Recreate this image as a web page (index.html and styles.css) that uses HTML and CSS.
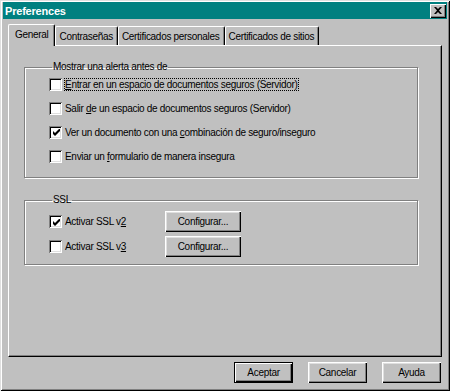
FILE: index.html
```html
<!DOCTYPE html>
<html>
<head>
<meta charset="utf-8">
<link rel="stylesheet" href="styles.css">
</head>
<body>
<div class="window">
  <div class="titlebar">
    <span class="title">Preferences</span>
    <span class="close"><svg width="8" height="7" viewBox="0 0 8 7"><path d="M0 0h2l2 2 2-2h2L5 3.5 8 7H6L4 5 2 7H0l3-3.5z" fill="#000"/></svg></span>
  </div>
  <div class="tabs">
    <div class="tab active">General</div>
    <div class="tab">Contraseñas</div>
    <div class="tab">Certificados personales</div>
    <div class="tab">Certificados de sitios</div>
  </div>
  <div class="panel">
    <fieldset class="group g1">
      <legend>Mostrar una alerta antes de</legend>
      <div class="row first"><span class="cb"></span><span class="lbl focus"><u>E</u>ntrar en un espacio de documentos seguros (Servidor)</span></div>
      <div class="row"><span class="cb"></span><span class="lbl">Salir <u>d</u>e un espacio de documentos seguros (Servidor)</span></div>
      <div class="row"><span class="cb checked"><svg width="7" height="7" viewBox="0 0 7 7"><path d="M0 2v3l2 2 5-5V-1L2 4z" fill="#000"/></svg></span><span class="lbl">Ver un documento con una <u>c</u>ombinación de seguro/inseguro</span></div>
      <div class="row"><span class="cb"></span><span class="lbl">Enviar un <u>f</u>ormulario de manera insegura</span></div>
    </fieldset>
    <fieldset class="group g2">
      <legend>SSL</legend>
      <div class="row ssl"><span class="cb checked"><svg width="7" height="7" viewBox="0 0 7 7"><path d="M0 2v3l2 2 5-5V-1L2 4z" fill="#000"/></svg></span><span class="lbl sslbl">Activar SSL v<u>2</u></span><button class="btn cfg">Configurar...</button></div>
      <div class="row ssl"><span class="cb"></span><span class="lbl sslbl">Activar SSL v<u>3</u></span><button class="btn cfg">Configurar...</button></div>
    </fieldset>
  </div>
  <div class="buttons">
    <button class="btn default">Aceptar</button>
    <button class="btn">Cancelar</button>
    <button class="btn">Ayuda</button>
  </div>
</div>
</body>
</html>
```

FILE: styles.css
```css
* { box-sizing: border-box; }
html, body { margin: 0; padding: 0; background: #c0c0c0; }
body {
  font-family: "Liberation Sans", Arial, sans-serif;
  font-size: 10px;
  letter-spacing: -0.3px;
  color: #000;
}
.window {
  width: 450px;
  height: 391px;
  background: #c0c0c0;
  padding: 3px;
  box-shadow: inset 1px 1px 0 #dfdfdf, inset -1px -1px 0 #000, inset 2px 2px 0 #fff, inset -2px -2px 0 #808080;
  display: flex;
  flex-direction: column;
}
.titlebar {
  height: 17px;
  background: #008080;
  display: flex;
  align-items: center;
  justify-content: space-between;
  padding: 0 1px 0 2px;
  margin-top: -1px;
}
.title {
  color: #fff;
  font-weight: bold;
  font-size: 11px;
  letter-spacing: -0.2px;
}
.close {
  width: 16px;
  height: 14px;
  background: #c0c0c0;
  box-shadow: inset 1px 1px 0 #fff, inset -1px -1px 0 #000, inset -2px -2px 0 #808080;
  display: flex;
  align-items: center;
  justify-content: center;
  padding-bottom: 1px;
}
.tabs {
  display: flex;
  margin-top: 5px;
  padding-left: 5px;
  height: 21px;
  align-items: flex-end;
  position: relative;
  z-index: 1;
}
.tab {
  height: 19px;
  padding: 0 4px 0 3px;
  display: flex;
  align-items: center;
  border-top: 1px solid #fff;
  border-left: 1px solid #fff;
  border-right: 1px solid #000;
  border-radius: 2px 2px 0 0;
  box-shadow: inset -1px 0 0 #808080;
  white-space: nowrap;
}
.tab.active {
  height: 22px;
  margin-bottom: -1px;
  background: #c0c0c0;
  padding: 0 6px 3px;
}
.panel {
  margin-left: 5px;
  width: 434px;
  height: 312px;
  border-top: 1px solid #fff;
  border-left: 1px solid #fff;
  border-right: 1px solid #000;
  border-bottom: 1px solid #000;
  box-shadow: inset -1px -1px 0 #808080;
  padding: 15px 23px 0 15px;
}
.group {
  margin: 0;
  padding: 0 0 0 24px;
  border: 1px solid #808080;
  box-shadow: 1px 1px 0 #fff, inset 1px 1px 0 #fff;
}
.group legend {
  padding: 0 1px 0 1px;
  margin-left: 3px;
  line-height: 12px;
}
.g1 { height: 117px; padding-top: 0; }
.g2 { height: 71px; margin-top: 16px; padding-top: 3px; }
.row {
  display: flex;
  align-items: center;
  height: 24px;
}
.row.first { margin-top: -1px; }
.cb {
  width: 13px;
  height: 13px;
  background: #fff;
  box-shadow: inset 1px 1px 0 #808080, inset -1px -1px 0 #fff, inset 2px 2px 0 #000, inset -2px -2px 0 #dfdfdf;
  flex: none;
  display: flex;
  align-items: center;
  justify-content: center;
  padding: 1px 0 0 1px;
}
.lbl {
  margin-left: 2px;
  padding: 1px 1px;
  white-space: nowrap;
}
.focus { outline: 1px dotted #000; outline-offset: -1px; }
.sslbl { width: 101px; }
.ssl { height: 25px; }
.btn {
  font-family: "Liberation Sans", Arial, sans-serif;
  font-size: 10px;
  letter-spacing: -0.3px;
  color: #000;
  background: #c0c0c0;
  border: none;
  width: 59px;
  height: 21px;
  padding: 0;
  box-shadow: inset 1px 1px 0 #fff, inset -1px -1px 0 #000, inset -2px -2px 0 #808080, inset 2px 2px 0 #dfdfdf;
}
.cfg { width: 76px; height: 21px; }
.default {
  box-shadow: inset 0 0 0 1px #000, inset 1px 1px 0 1px #fff, inset -1px -1px 0 1px #000, inset -2px -2px 0 1px #808080;
}
.buttons {
  display: flex;
  justify-content: flex-end;
  gap: 15px;
  padding-right: 6px;
  margin-top: 5px;
}
```
